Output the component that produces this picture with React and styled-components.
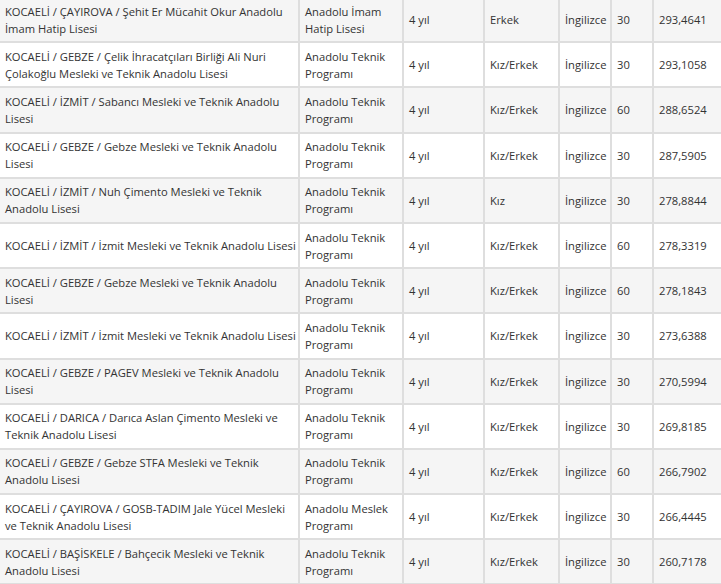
import React from "react";
import styled, { createGlobalStyle } from "styled-components";

const Global = createGlobalStyle`
  html, body { margin: 0; padding: 0; background: #fff; overflow: hidden; }
  body { font-family: "Open Sans", "Noto Sans", sans-serif; }
`;

const Table = styled.table`
  border-collapse: separate;
  border-spacing: 0;
  table-layout: fixed;
  width: 740px;
  margin-top: -2px;
  font-family: "Open Sans", "Noto Sans", sans-serif;
  font-size: 11.2px;
  color: #333;
`;

const Col = styled.col`
  width: ${(p) => p.$w}px;
`;

const Row = styled.tr`
  background: ${(p) => (p.$alt ? "#f5f5f5" : "#ffffff")};
`;

const Cell = styled.td`
  height: 45.2px;
  box-sizing: border-box;
  padding: 0 3px 0 5px;
  line-height: 17px;
  vertical-align: middle;
  white-space: nowrap;
  overflow: hidden;
  border-right: 2px solid #dedede;
  border-bottom: 2px solid #dedede;
`;

const TAP = ["Anadolu Teknik", "Programı"];

const widths = [300, 104, 81, 75, 52, 42, 86];

const rows = [
  [["KOCAELİ / ÇAYIROVA / Şehit Er Mücahit Okur Anadolu", "İmam Hatip Lisesi"], ["Anadolu İmam", "Hatip Lisesi"], "Erkek", "30", "293,4641"],
  [["KOCAELİ / GEBZE / Çelik İhracatçıları Birliği Ali Nuri", "Çolakoğlu Mesleki ve Teknik Anadolu Lisesi"], TAP, "Kız/Erkek", "30", "293,1058"],
  [["KOCAELİ / İZMİT / Sabancı Mesleki ve Teknik Anadolu", "Lisesi"], TAP, "Kız/Erkek", "60", "288,6524"],
  [["KOCAELİ / GEBZE / Gebze Mesleki ve Teknik Anadolu", "Lisesi"], TAP, "Kız/Erkek", "30", "287,5905"],
  [["KOCAELİ / İZMİT / Nuh Çimento Mesleki ve Teknik", "Anadolu Lisesi"], TAP, "Kız", "30", "278,8844"],
  [["KOCAELİ / İZMİT / İzmit Mesleki ve Teknik Anadolu Lisesi"], TAP, "Kız/Erkek", "60", "278,3319"],
  [["KOCAELİ / GEBZE / Gebze Mesleki ve Teknik Anadolu", "Lisesi"], TAP, "Kız/Erkek", "60", "278,1843"],
  [["KOCAELİ / İZMİT / İzmit Mesleki ve Teknik Anadolu Lisesi"], TAP, "Kız/Erkek", "30", "273,6388"],
  [["KOCAELİ / GEBZE / PAGEV Mesleki ve Teknik Anadolu", "Lisesi"], TAP, "Kız/Erkek", "30", "270,5994"],
  [["KOCAELİ / DARICA / Darıca Aslan Çimento Mesleki ve", "Teknik Anadolu Lisesi"], TAP, "Kız/Erkek", "30", "269,8185"],
  [["KOCAELİ / GEBZE / Gebze STFA Mesleki ve Teknik", "Anadolu Lisesi"], TAP, "Kız/Erkek", "60", "266,7902"],
  [["KOCAELİ / ÇAYIROVA / GOSB-TADIM Jale Yücel Mesleki", "ve Teknik Anadolu Lisesi"], ["Anadolu Meslek", "Programı"], "Kız/Erkek", "30", "266,4445"],
  [["KOCAELİ / BAŞİSKELE / Bahçecik Mesleki ve Teknik", "Anadolu Lisesi"], TAP, "Kız/Erkek", "30", "260,7178"],
];

const Lines = ({ lines }) =>
  lines.map((l, i) => (
    <React.Fragment key={i}>
      {i > 0 && <br />}
      {l}
    </React.Fragment>
  ));

export default function App() {
  return (
    <>
      <Global />
      <Table>
        <colgroup>
          {widths.map((w, i) => (
            <Col key={i} $w={w} />
          ))}
        </colgroup>
        <tbody>
          {rows.map((r, i) => (
            <Row key={i} $alt={i % 2 === 0}>
              <Cell><Lines lines={r[0]} /></Cell>
              <Cell><Lines lines={r[1]} /></Cell>
              <Cell>4 yıl</Cell>
              <Cell>{r[2]}</Cell>
              <Cell>İngilizce</Cell>
              <Cell>{r[3]}</Cell>
              <Cell>{r[4]}</Cell>
            </Row>
          ))}
        </tbody>
      </Table>
    </>
  );
}
